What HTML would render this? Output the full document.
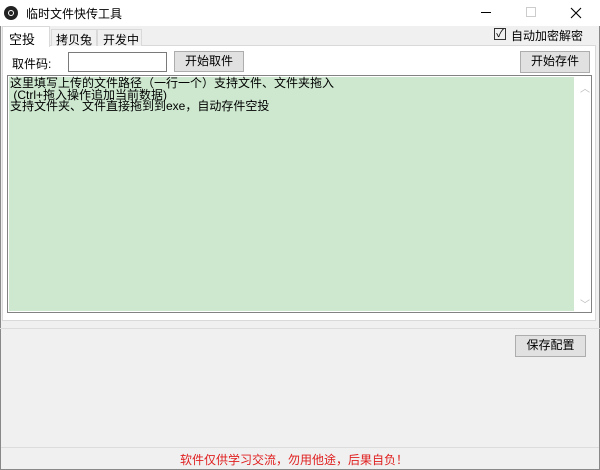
<!DOCTYPE html>
<html><head><meta charset="utf-8"><style>
*{margin:0;padding:0;box-sizing:border-box}
body{width:600px;height:470px;background:#f0f0f0;font-family:"Liberation Sans","Noto Sans CJK SC",sans-serif;font-size:12px;color:#000;position:relative;overflow:hidden}
.a{position:absolute}
.btn{position:absolute;background:#e1e1e1;border:1px solid #adadad;text-align:center;font-size:12px;line-height:19px}
</style></head><body>
<div class="a" style="left:0;top:0;width:600px;height:26px;background:#fff"></div>
<div class="a" style="left:4px;top:6px;width:14px;height:14px;border-radius:50%;background:#222"></div>
<div class="a" style="left:8px;top:10px;width:6px;height:6px;border-radius:50%;border:1px solid #fff"></div>
<div class="a" style="left:26px;top:5px;font-size:12px">临时文件快传工具</div>
<div class="a" style="left:481px;top:12px;width:10px;height:1px;background:#000"></div>
<div class="a" style="left:526px;top:7px;width:10px;height:10px;border:1px solid #ccc"></div>
<svg class="a" style="left:570px;top:7px" width="12" height="12"><path d="M1 1L11 11M11 1L1 11" stroke="#000" stroke-width="1.1"/></svg>
<div class="a" style="left:0;top:26px;width:1px;height:444px;background:#888"></div>
<div class="a" style="left:599px;top:26px;width:1px;height:444px;background:#888"></div>
<div class="a" style="left:0;top:469px;width:600px;height:1px;background:#888"></div>
<div class="a" style="left:2px;top:45px;width:594px;height:276px;background:#fff;border:1px solid #d9d9d9"></div>
<div class="a" style="left:2px;top:26px;width:48px;height:21px;background:#fff;border:1px solid #d9d9d9;border-bottom:none;padding:2px 0 0 6px;font-size:13px">空投</div>
<div class="a" style="left:51px;top:29px;width:46px;height:17px;background:#f0f0f0;border:1px solid #d9d9d9;border-bottom:none;padding:1px 0 0 4px">拷贝兔</div>
<div class="a" style="left:97px;top:29px;width:45px;height:17px;background:#f0f0f0;border:1px solid #d9d9d9;border-bottom:none;padding:1px 0 0 5px">开发中</div>
<div class="a" style="left:494px;top:28px;width:12px;height:12px;border:1px solid #333;font-size:11px;line-height:10px;text-align:center">✓</div>
<div class="a" style="left:511px;top:27px">自动加密解密</div>
<div class="a" style="left:12px;top:55px">取件码:</div>
<div class="a" style="left:68px;top:52px;width:99px;height:20px;border:1px solid #7a7a7a;background:#fff"></div>
<div class="btn" style="left:174px;top:51px;width:70px;height:21px">开始取件</div>
<div class="btn" style="left:520px;top:51px;width:70px;height:22px">开始存件</div>
<div class="a" style="left:7px;top:75px;width:585px;height:238px;border:1px solid #828282;background:#fff"></div>
<div class="a" style="left:9px;top:77px;width:565px;height:234px;background:#cde8cf;font-size:12px;line-height:11.5px;padding:1px 0 0 1px;white-space:pre">这里填写上传的文件路径（一行一个）支持文件、文件夹拖入
 (Ctrl+拖入操作追加当前数据)
支持文件夹、文件直接拖到到exe，自动存件空投</div>
<div class="a" style="left:580px;top:80px;font-size:10px;color:#bbb">︿</div>
<div class="a" style="left:580px;top:296px;font-size:10px;color:#bbb">﹀</div>
<div class="a" style="left:0;top:328px;width:600px;height:1px;background:#dcdcdc"></div>
<div class="btn" style="left:515px;top:335px;width:71px;height:22px">保存配置</div>
<div class="a" style="left:1px;top:447px;width:598px;height:1px;background:#dcdcdc"></div>
<div class="a" style="left:180px;top:451px;color:#e02020">软件仅供学习交流，勿用他途，后果自负！</div>
</body></html>
